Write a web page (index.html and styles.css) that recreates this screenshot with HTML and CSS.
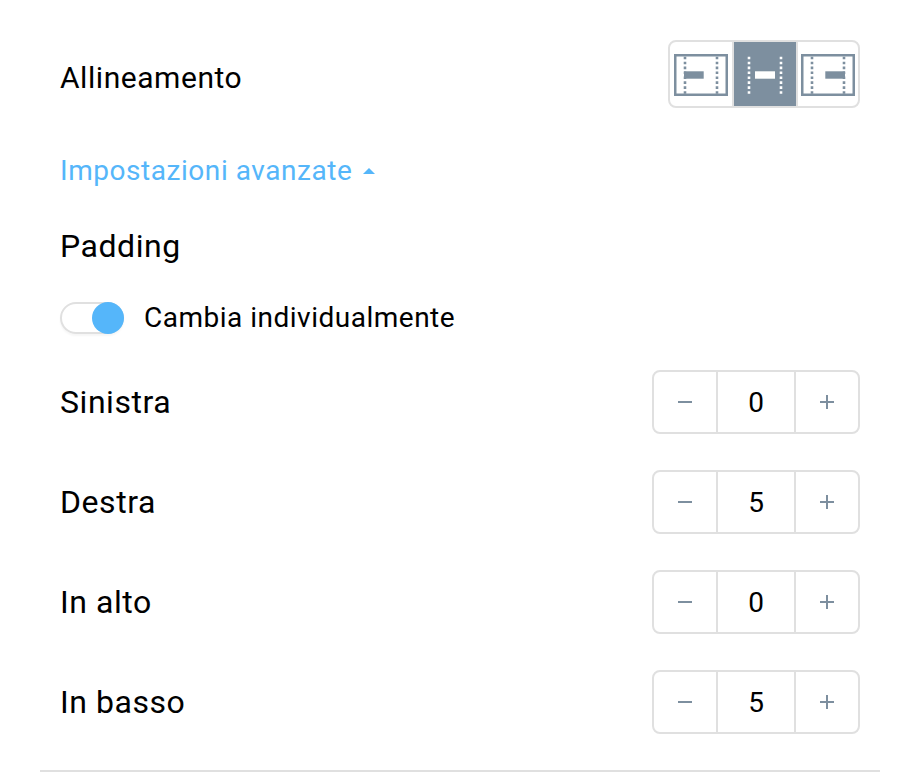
FILE: index.html
```html
<!DOCTYPE html>
<html lang="it">
<head>
  <meta charset="UTF-8" />
  <meta name="viewport" content="width=device-width, initial-scale=1.0"/>
  <title>Impostazioni</title>
  <link rel="stylesheet" href="styles.css">
</head>
<body>
  <div class="panel">
    <div class="row align-row">
      <span class="label label-small">Allineamento</span>
      <div class="align-group">
        <button class="align-btn" title="Sinistra">
          <svg width="54" height="42" viewBox="0 0 54 42">
            <rect class="frame" x="1.25" y="1.25" width="51.5" height="39.5"/>
            <path class="dots" d="M11 2.7V40M43 2.7V40"/>
            <rect class="bar" x="10" y="17.3" width="19.7" height="7.4"/>
          </svg>
        </button>
        <button class="align-btn active" title="Centro">
          <svg width="54" height="42" viewBox="0 0 54 42">
            <path class="dots" d="M11 2.7V40M43 2.7V40"/>
            <rect class="bar" x="17" y="17.3" width="20" height="7.4"/>
          </svg>
        </button>
        <button class="align-btn" title="Destra">
          <svg width="54" height="42" viewBox="0 0 54 42">
            <rect class="frame" x="1.25" y="1.25" width="51.5" height="39.5"/>
            <path class="dots" d="M11 2.7V40M43 2.7V40"/>
            <rect class="bar" x="24.3" y="17.3" width="19.7" height="7.4"/>
          </svg>
        </button>
      </div>
    </div>

    <div class="advanced">
      <span>Impostazioni avanzate</span>
      <svg class="caret" width="12" height="6" viewBox="0 0 12 6"><path d="M0 6L6 0L12 6Z"/></svg>
    </div>

    <div class="label heading">Padding</div>

    <div class="toggle-row">
      <div class="toggle"><div class="knob"></div></div>
      <span class="toggle-text">Cambia individualmente</span>
    </div>

    <div class="row">
      <span class="label">Sinistra</span>
      <div class="stepper">
        <button class="step"><svg width="14" height="14"><path d="M0 7H14"/></svg></button>
        <span class="value">0</span>
        <button class="step"><svg width="14" height="14"><path d="M0 7H14M7 0V14"/></svg></button>
      </div>
    </div>
    <div class="row">
      <span class="label">Destra</span>
      <div class="stepper">
        <button class="step"><svg width="14" height="14"><path d="M0 7H14"/></svg></button>
        <span class="value">5</span>
        <button class="step"><svg width="14" height="14"><path d="M0 7H14M7 0V14"/></svg></button>
      </div>
    </div>
    <div class="row">
      <span class="label">In alto</span>
      <div class="stepper">
        <button class="step"><svg width="14" height="14"><path d="M0 7H14"/></svg></button>
        <span class="value">0</span>
        <button class="step"><svg width="14" height="14"><path d="M0 7H14M7 0V14"/></svg></button>
      </div>
    </div>
    <div class="row">
      <span class="label">In basso</span>
      <div class="stepper">
        <button class="step"><svg width="14" height="14"><path d="M0 7H14"/></svg></button>
        <span class="value">5</span>
        <button class="step"><svg width="14" height="14"><path d="M0 7H14M7 0V14"/></svg></button>
      </div>
    </div>
  </div>
</body>
</html>
```
FILE: styles.css
```css
* {
  box-sizing: border-box;
}
body {
  margin: 0;
  background: #fff;
  color: #000;
  font-family: Roboto, sans-serif;
  font-size: 28px;
  letter-spacing: 0.5px;
}
button {
  margin: 0;
  padding: 0;
  border: none;
  background: none;
  cursor: pointer;
}
svg {
  display: block;
}
.panel {
  margin: 0 40px;
  padding: 40px 20px 36px;
  border-bottom: 2px solid #e0e0e0;
}
.row {
  display: flex;
  align-items: center;
  justify-content: space-between;
  height: 64px;
  margin-top: 36px;
}
.align-row {
  height: 68px;
  margin-top: 0;
}
.label {
  font-size: 32px;
  line-height: 40px;
  letter-spacing: 0.55px;
}
.label-small {
  font-size: 30px;
  padding-top: 8px;
}

/* alignment buttons */
.align-group {
  display: flex;
  width: 192px;
  height: 68px;
  border: 2px solid #e0e0e0;
  border-radius: 8px;
  overflow: hidden;
}
.align-btn {
  width: 62px;
  display: flex;
  align-items: center;
  padding: 2px 0 0 4px;
}
.align-btn + .align-btn {
  width: 64px;
  border-left: 2px solid #e0e0e0;
}
.align-btn + .align-btn:last-child {
  width: 62px;
  padding-left: 3px;
}
.frame {
  fill: none;
  stroke: #7d8f9f;
  stroke-width: 2.5;
}
.dots {
  fill: none;
  stroke: #7d8f9f;
  stroke-width: 2.6;
  stroke-dasharray: 2.6 2.33;
}
.bar {
  fill: #7d8f9f;
}
.active {
  background: #7d8f9f;
  background-clip: padding-box;
}
.active .dots {
  stroke: #fff;
}
.active .bar {
  fill: #fff;
}

.advanced {
  display: flex;
  align-items: center;
  gap: 11px;
  height: 40px;
  margin-top: 43px;
  color: #55b6fa;
  letter-spacing: 0.55px;
}
.advanced span {
  padding-bottom: 2px;
}
.caret {
  fill: #55b6fa;
}
.heading {
  margin-top: 35px;
}

/* toggle */
.toggle-row {
  display: flex;
  align-items: center;
  gap: 20px;
  height: 32px;
  margin-top: 36px;
}
.toggle {
  display: flex;
  justify-content: flex-end;
  width: 64px;
  height: 32px;
  border-radius: 16px;
  box-shadow: inset 0 0 0 2px #e0e0e0, 0 2px 2px rgba(0,0,0,0.04);
}
.toggle-text {
  padding-bottom: 2px;
}
.knob {
  width: 32px;
  height: 32px;
  border-radius: 50%;
  background: #55b6fa;
}

/* number stepper */
.stepper {
  display: flex;
  width: 208px;
  height: 64px;
  border: 2px solid #e0e0e0;
  border-radius: 8px;
}
.step {
  display: flex;
  align-items: center;
  justify-content: center;
  width: 62px;
}
.step path {
  fill: none;
  stroke: #7d8f9f;
  stroke-width: 2;
}
.value {
  flex: 1;
  border: solid #e0e0e0;
  border-width: 0 2px;
  line-height: 62px;
  height: 60px;
  text-align: center;
  letter-spacing: 0;
}
```
